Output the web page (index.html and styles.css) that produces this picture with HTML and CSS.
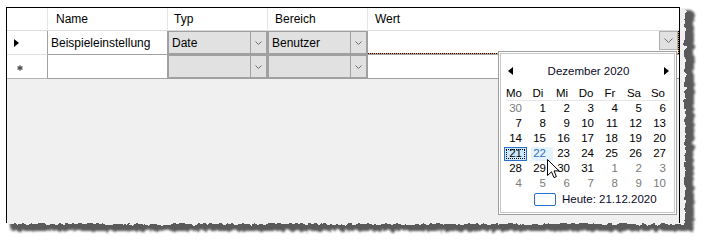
FILE: index.html
```html
<!DOCTYPE html>
<html lang="de">
<head>
<meta charset="utf-8">
<title>Einstellungen</title>
<link rel="stylesheet" href="styles.css">
</head>
<body>
<div class="stage">
  <svg class="torn" width="706" height="244" viewBox="0 0 706 244">
    <defs>
      <filter id="rough" x="-5%" y="-5%" width="110%" height="110%">
        <feTurbulence type="fractalNoise" baseFrequency="0.22" numOctaves="2" seed="4" result="n"/>
        <feDisplacementMap in="SourceGraphic" in2="n" scale="6" xChannelSelector="R" yChannelSelector="G"/>
      </filter>
      <filter id="roughShadow" x="-5%" y="-5%" width="110%" height="110%">
        <feTurbulence type="fractalNoise" baseFrequency="0.22" numOctaves="2" seed="4" result="n"/>
        <feDisplacementMap in="SourceGraphic" in2="n" scale="6" xChannelSelector="R" yChannelSelector="G" result="d"/>
        <feGaussianBlur in="d" stdDeviation="1.3"/>
      </filter>
    </defs>
    <rect x="10" y="11" width="684" height="220" fill="#5a5a5a" filter="url(#roughShadow)"/>
    <rect x="8" y="9" width="677" height="215" fill="#f0f0f0" filter="url(#rough)"/>
  </svg>

  <div class="frame">
    <div class="grid">
      <div class="hc rhh"></div>
      <div class="hc pl8">Name</div>
      <div class="hc pl6">Typ</div>
      <div class="hc pl7">Bereich</div>
      <div class="hc pl7 last">Wert</div>

      <div class="rh">
        <svg width="5" height="8" viewBox="0 0 5 8"><polygon points="0,0 5,4 0,8" fill="#000"/></svg>
      </div>
      <div class="cell">Beispieleinstellung</div>
      <div class="ccell">
        <div class="combo">
          <span class="val">Date</span>
          <span class="btn"><svg width="7" height="4" viewBox="0 0 7 4"><polyline points="0.5,0.5 3.5,3.5 6.5,0.5" fill="none" stroke="#6a6a6a" stroke-width="1"/></svg></span>
        </div>
      </div>
      <div class="ccell">
        <div class="combo">
          <span class="val">Benutzer</span>
          <span class="btn"><svg width="7" height="4" viewBox="0 0 7 4"><polyline points="0.5,0.5 3.5,3.5 6.5,0.5" fill="none" stroke="#6a6a6a" stroke-width="1"/></svg></span>
        </div>
      </div>
      <div class="wcell">
        <div class="edit">
          <span class="dbtn"><svg width="9" height="5" viewBox="0 0 9 5"><polyline points="0.5,0.5 4.5,4.5 8.5,0.5" fill="none" stroke="#6a6a6a" stroke-width="1"/></svg></span>
        </div>
      </div>

      <div class="rh rhlast">
        <svg width="6" height="6" viewBox="0 0 6 6"><g stroke="#505050" stroke-width="1.3"><line x1="3" y1="0.3" x2="3" y2="5.7"/><line x1="0.5" y1="1.6" x2="5.5" y2="4.4"/><line x1="0.5" y1="4.4" x2="5.5" y2="1.6"/></g></svg>
      </div>
      <div class="cell"></div>
      <div class="ccell">
        <div class="combo">
          <span class="val"></span>
          <span class="btn"><svg width="7" height="4" viewBox="0 0 7 4"><polyline points="0.5,0.5 3.5,3.5 6.5,0.5" fill="none" stroke="#6a6a6a" stroke-width="1"/></svg></span>
        </div>
      </div>
      <div class="ccell">
        <div class="combo">
          <span class="val"></span>
          <span class="btn"><svg width="7" height="4" viewBox="0 0 7 4"><polyline points="0.5,0.5 3.5,3.5 6.5,0.5" fill="none" stroke="#6a6a6a" stroke-width="1"/></svg></span>
        </div>
      </div>
      <div class="wcell plain"></div>
    </div>

    <div class="cal">
      <div class="cal-in">
        <div class="cal-title">
          <svg class="arr-l" width="5" height="8" viewBox="0 0 5 8"><polygon points="5,0 0,4 5,8" fill="#000"/></svg>
          <span class="month">Dezember 2020</span>
          <svg class="arr-r" width="5" height="8" viewBox="0 0 5 8"><polygon points="0,0 5,4 0,8" fill="#000"/></svg>
        </div>
        <div class="cal-wd">
          <span>Mo</span><span>Di</span><span>Mi</span><span>Do</span><span>Fr</span><span>Sa</span><span>So</span>
        </div>
        <div class="cal-sep"></div>
        <div class="cal-days">
          <span class="o">30</span><span>1</span><span>2</span><span>3</span><span>4</span><span>5</span><span>6</span>
          <span>7</span><span>8</span><span>9</span><span>10</span><span>11</span><span>12</span><span>13</span>
          <span>14</span><span>15</span><span>16</span><span>17</span><span>18</span><span>19</span><span>20</span>
          <span class="sel"><b>21</b></span><span class="hov"><b>22</b></span><span>23</span><span>24</span><span>25</span><span>26</span><span>27</span>
          <span>28</span><span>29</span><span>30</span><span>31</span><span class="o">1</span><span class="o">2</span><span class="o">3</span>
          <span class="o">4</span><span class="o">5</span><span class="o">6</span><span class="o">7</span><span class="o">8</span><span class="o">9</span><span class="o">10</span>
        </div>
        <div class="cal-today">
          <span class="tbox"></span>
          <span>Heute: 21.12.2020</span>
        </div>
      </div>
    </div>

    <svg class="cursor" width="13" height="20" viewBox="0 0 13 20">
      <path d="M0.5,0.5 L0.5,16.5 L4.5,12.8 L7,18.6 L9.4,17.6 L7,11.9 L12,11.9 Z" fill="#fff" stroke="#000" stroke-width="1" stroke-linejoin="miter"/>
    </svg>
  </div>
</div>
</body>
</html>
```

FILE: styles.css
```css
html, body {
  margin: 0;
  padding: 0;
  background: #ffffff;
}

.stage {
  position: relative;
  width: 706px;
  height: 244px;
  overflow: hidden;
}

.torn {
  position: absolute;
  left: 0;
  top: 0;
}

.frame {
  position: relative;
  margin: 7px 0 0 6px;
  width: 674px;
  height: 216px;
  box-sizing: border-box;
  border: 1px solid #000;
  border-bottom: none;
  background: #f0f0f0;
  font-family: "Liberation Sans", Arial, sans-serif;
  font-size: 12px;
  color: #000;
}

.grid {
  display: grid;
  grid-template-columns: 41px 120px 100px 100px 311px;
  grid-template-rows: 23px 24px 24px;
}

.hc {
  background: #fff;
  border-right: 1px solid #e5e5e5;
  border-bottom: 1px solid #dcdcdc;
  display: flex;
  align-items: center;
  box-sizing: border-box;
}
.hc.last { border-right: none; }
.pl8 { padding-left: 8px; }
.pl6 { padding-left: 6px; }
.pl7 { padding-left: 7px; }

.rh {
  background: #fff;
  border-right: 1px solid #a0a0a0;
  border-bottom: 1px solid #e3e3e3;
  display: flex;
  align-items: center;
  padding-left: 7px;
  box-sizing: border-box;
}
.rh.rhlast {
  border-bottom-color: #b4b4b4;
  padding-left: 10px;
  padding-top: 3px;
}

.cell {
  background: #fff;
  border-right: 1px solid #a0a0a0;
  border-bottom: 1px solid #a0a0a0;
  display: flex;
  align-items: center;
  padding-left: 3px;
  box-sizing: border-box;
  white-space: nowrap;
}

.ccell {
  border-right: 1px solid #a0a0a0;
  border-bottom: 1px solid #a0a0a0;
  display: flex;
  box-sizing: border-box;
}

.combo {
  flex: 1;
  display: flex;
  background: #e1e1e1;
  border: 1px solid #a0a0a0;
}
.combo .val {
  flex: 1;
  display: flex;
  align-items: center;
  padding-left: 3px;
}
.combo .btn {
  width: 16px;
  box-sizing: border-box;
  border-left: 1px solid #a0a0a0;
  display: flex;
  align-items: center;
  justify-content: center;
  padding-top: 1px;
}

.wcell {
  background: #fff;
  border-bottom: 1px solid #a0a0a0;
  display: flex;
  box-sizing: border-box;
}

.edit {
  flex: 1;
  display: flex;
  justify-content: flex-end;
  align-items: flex-start;
  padding-right: 1px;
  background:
    repeating-linear-gradient(90deg, #000 0 1px, #f0a030 1px 2px) left bottom / 100% 1px no-repeat,
    repeating-linear-gradient(180deg, #000 0 1px, #f0a030 1px 2px) right top / 1px 100% no-repeat;
}

.dbtn {
  width: 19px;
  height: 19px;
  box-sizing: border-box;
  border: 1px solid #adadad;
  background: #e1e1e1;
  display: flex;
  align-items: center;
  justify-content: center;
}

.cal {
  position: absolute;
  left: 491px;
  top: 43px;
  width: 179px;
  height: 164px;
  box-sizing: border-box;
  border: 1px solid #a0a0a0;
  padding: 1px;
  background: #fff;
  font-size: 11.5px;
}

.cal-in {
  height: 100%;
  box-sizing: border-box;
  border: 1px solid #c8c8c8;
  padding-top: 8px;
}

.cal-title {
  height: 18px;
  display: flex;
  align-items: center;
  padding: 0 5px 0 7px;
}
.cal-title .month {
  flex: 1;
  text-align: center;
  color: #0a0a28;
}

.cal-wd {
  margin: 5px 0 0 1px;
  height: 15px;
  display: grid;
  grid-template-columns: repeat(7, 24px);
  align-items: center;
  text-align: center;
}

.cal-sep {
  height: 1px;
  width: 162px;
  margin-left: 5px;
  background: #e6e6e6;
}

.cal-days {
  margin-left: 1px;
  display: grid;
  grid-template-columns: repeat(7, 24px);
  grid-auto-rows: 15px;
  align-items: center;
}
.cal-days span {
  position: relative;
  text-align: right;
  padding-right: 4px;
  line-height: 15px;
}
.cal-days span b {
  position: relative;
  font-weight: normal;
}
.cal-days .o { color: #7a7a7a; }

.cal-days .sel::before {
  content: "";
  position: absolute;
  left: 2px;
  top: 1px;
  width: 23px;
  height: 14px;
  box-sizing: border-box;
  background: #cce8ff;
  border: 1px solid #2a6fc9;
}
.cal-days .sel::after {
  content: "";
  position: absolute;
  left: 4px;
  top: 3px;
  width: 19px;
  height: 10px;
  box-sizing: border-box;
  border: 1px dotted #000;
}
.cal-days .hov { color: #2e6fc0; }
.cal-days .hov::before {
  content: "";
  position: absolute;
  left: 5px;
  top: 1px;
  width: 22px;
  height: 14px;
  background: #e5f3ff;
}

.cal-today {
  height: 16px;
  display: flex;
  align-items: center;
  padding-left: 33px;
  color: #0a0a28;
}
.tbox {
  width: 22px;
  height: 13px;
  box-sizing: border-box;
  border: 1px solid #2a6fc9;
  border-radius: 2px;
  margin-right: 6px;
}

.cursor {
  position: absolute;
  left: 540px;
  top: 151px;
}
```
